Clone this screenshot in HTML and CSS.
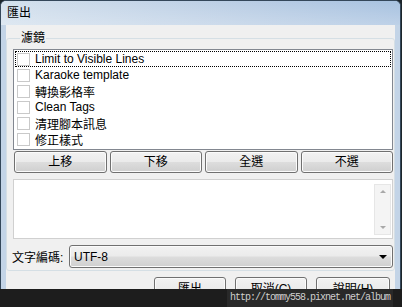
FILE: index.html
```html
<!DOCTYPE html>
<html lang="zh-Hant">
<head>
    <meta charset="UTF-8">
    <title>匯出</title>
    <link rel="stylesheet" href="styles.css">
</head>
<body>

<div class="window">
    <div class="titlebar">匯出</div>

    <div class="client">
        <fieldset class="group">
            <legend>濾鏡</legend>

            <ul class="filters">
                <li class="focused"><span class="check"></span>Limit to Visible Lines</li>
                <li><span class="check"></span>Karaoke template</li>
                <li><span class="check"></span>轉換影格率</li>
                <li><span class="check"></span>Clean Tags</li>
                <li><span class="check"></span>清理腳本訊息</li>
                <li><span class="check"></span>修正樣式</li>
            </ul>

            <div class="move-buttons">
                <button class="btn">上移</button>
                <button class="btn">下移</button>
                <button class="btn">全選</button>
                <button class="btn">不選</button>
            </div>

            <div class="memo">
                <div class="memo-text"></div>
                <div class="scrollbar">
                    <span class="arrow up"></span>
                    <span class="arrow down"></span>
                </div>
            </div>

            <div class="encoding">
                <span class="label">文字編碼:</span>
                <div class="combo">
                    <span>UTF-8</span>
                    <span class="combo-arrow"></span>
                </div>
            </div>
        </fieldset>

        <div class="dialog-buttons">
            <button class="btn wide">匯出</button>
            <button class="btn wide">取消(C)</button>
            <button class="btn wide help">說明(H)</button>
        </div>
    </div>
</div>

<!-- taskbar strip that covers the bottom of the dialog -->
<div class="taskbar">
    <span class="watermark">http://tommy558.pixnet.net/album</span>
</div>

</body>
</html>
```

FILE: styles.css
```css
body {
    margin: 0;
    padding: 0;
    width: 402px;
    height: 307px;
    overflow: hidden;
    background-color: #1c252b;
    font-family: "Liberation Sans", "Noto Sans CJK TC", sans-serif;
    font-size: 12px;
    color: #000;
}
.window {
    width: 399px;
    height: 306px;
    border: 1px solid #34475a;
    border-bottom: none;
    border-radius: 6px 6px 0 0;
    background-color: #c3d4e7;
    display: flex;
    flex-direction: column;
    overflow: hidden;
}
.titlebar {
    height: 24px;
    line-height: 24px;
    padding-left: 6px;
    background: linear-gradient(to bottom, rgba(255, 255, 255, 0) 0%, rgba(255, 255, 255, 0.25) 100%),
                linear-gradient(to right, #d3e0ed 0%, #bccfe5 55%, #a8c2e0 100%);
}
.client {
    flex: 1;
    margin: 0 5px;
    background-color: #f0f0f0;
    display: flex;
    flex-direction: column;
}
.group {
    margin: 6px 0 0 0;
    padding: 0 1px 2px 6px;
    border: 1px solid #d5dfe5;
    border-radius: 3px;
}
.group legend {
    padding: 0 1px;
    margin-left: 7px;
    line-height: 14px;
}
.filters {
    list-style-type: none;
    margin: 4px 0 0 0;
    padding: 1px 0 2px 0;
    border: 1px solid #828790;
    background-color: #fff;
}
.filters li {
    height: 16px;
    display: flex;
    align-items: center;
    margin: 0 1px;
    padding-left: 2px;
    box-sizing: border-box;
    white-space: nowrap;
}
.filters li.focused {
    outline: 1px dotted #000;
    outline-offset: -1px;
}
.check {
    width: 11px;
    height: 11px;
    border: 1px solid #c9c9c9;
    background-color: #fff;
    margin-right: 5px;
    flex-shrink: 0;
}
.btn {
    font-family: "Liberation Sans", "Noto Sans CJK TC", sans-serif;
    font-size: 12px;
    color: #000;
    height: 22px;
    padding: 0;
    border: 1px solid #707070;
    border-radius: 3px;
    background: linear-gradient(to bottom, #f2f2f2 0%, #ebebeb 48%, #dddddd 52%, #cfcfcf 100%);
    box-shadow: inset 0 0 0 1px #fbfbfb;
    line-height: 18px;
}
.move-buttons {
    display: grid;
    grid-template-columns: repeat(4, 1fr);
    gap: 3px;
    margin: 1px 0 0 1px;
}
.memo {
    margin-top: 6px;
    height: 58px;
    border: 1px solid #d0d0d0;
    background-color: #fff;
    display: flex;
}
.memo-text {
    flex: 1;
}
.scrollbar {
    width: 15px;
    margin: 4px 1px 3px 0;
    background-color: #f4f4f4;
    border: 1px solid #e6e6e6;
    display: flex;
    flex-direction: column;
    justify-content: space-between;
    align-items: center;
    padding: 5px 0;
}
.arrow {
    width: 0;
    height: 0;
    border-left: 3px solid transparent;
    border-right: 3px solid transparent;
}
.arrow.up {
    border-bottom: 3px solid #a8a8a8;
}
.arrow.down {
    border-top: 3px solid #a8a8a8;
}
.encoding {
    display: flex;
    align-items: center;
    margin-top: 6px;
}
.encoding .label {
    width: 57px;
    margin-left: -1px;
}
.combo {
    flex: 1;
    height: 21px;
    display: flex;
    align-items: center;
    justify-content: space-between;
    padding: 0 5px 0 4px;
    border: 1px solid #707070;
    border-radius: 3px;
    background: linear-gradient(to bottom, #f2f2f2 0%, #ebebeb 48%, #dddddd 52%, #cfcfcf 100%);
    box-shadow: inset 0 0 0 1px #fbfbfb;
}
.combo-arrow {
    width: 0;
    height: 0;
    border-left: 4px solid transparent;
    border-right: 4px solid transparent;
    border-top: 4px solid #000;
}
.dialog-buttons {
    display: flex;
    justify-content: flex-end;
    gap: 9px;
    margin-top: 6px;
    padding-right: 5px;
}
.btn.wide {
    width: 72px;
    height: 24px;
}
.btn.help {
    width: 74px;
}
.taskbar {
    position: absolute;
    left: 0;
    top: 289px;
    width: 402px;
    height: 18px;
    background-color: #1d1d1d;
    display: flex;
    justify-content: flex-end;
}
.watermark {
    margin-right: 9px;
    padding: 0 3px;
    font-family: "Liberation Mono", monospace;
    font-size: 10px;
    letter-spacing: -1px;
    line-height: 18px;
    color: #cfcfcf;
    background-color: #292929;
}
```
